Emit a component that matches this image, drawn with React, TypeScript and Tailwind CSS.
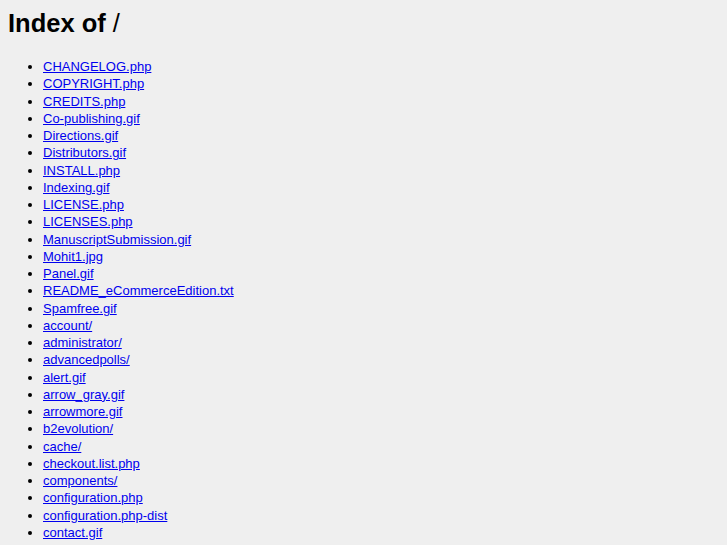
const files = [
  'CHANGELOG.php',
  'COPYRIGHT.php',
  'CREDITS.php',
  'Co-publishing.gif',
  'Directions.gif',
  'Distributors.gif',
  'INSTALL.php',
  'Indexing.gif',
  'LICENSE.php',
  'LICENSES.php',
  'ManuscriptSubmission.gif',
  'Mohit1.jpg',
  'Panel.gif',
  'README_eCommerceEdition.txt',
  'Spamfree.gif',
  'account/',
  'administrator/',
  'advancedpolls/',
  'alert.gif',
  'arrow_gray.gif',
  'arrowmore.gif',
  'b2evolution/',
  'cache/',
  'checkout.list.php',
  'components/',
  'configuration.php',
  'configuration.php-dist',
  'contact.gif',
];

export default function App() {
  return (
    <div className="min-h-screen bg-[#efefef] text-black font-['Liberation_Sans',Arial,sans-serif]">
      <h1 className="px-2 pt-[8px] text-[25.5px] leading-[30px] font-bold">
        Index of <span className="font-normal">/</span>
      </h1>
      <ul className="list-disc pl-[43px] mt-[20px] text-[13px] leading-[17.25px]">
        {files.map((f) => (
          <li key={f}>
            <a href="#" className="text-[#0000ee] underline">
              {f}
            </a>
          </li>
        ))}
      </ul>
    </div>
  );
}
